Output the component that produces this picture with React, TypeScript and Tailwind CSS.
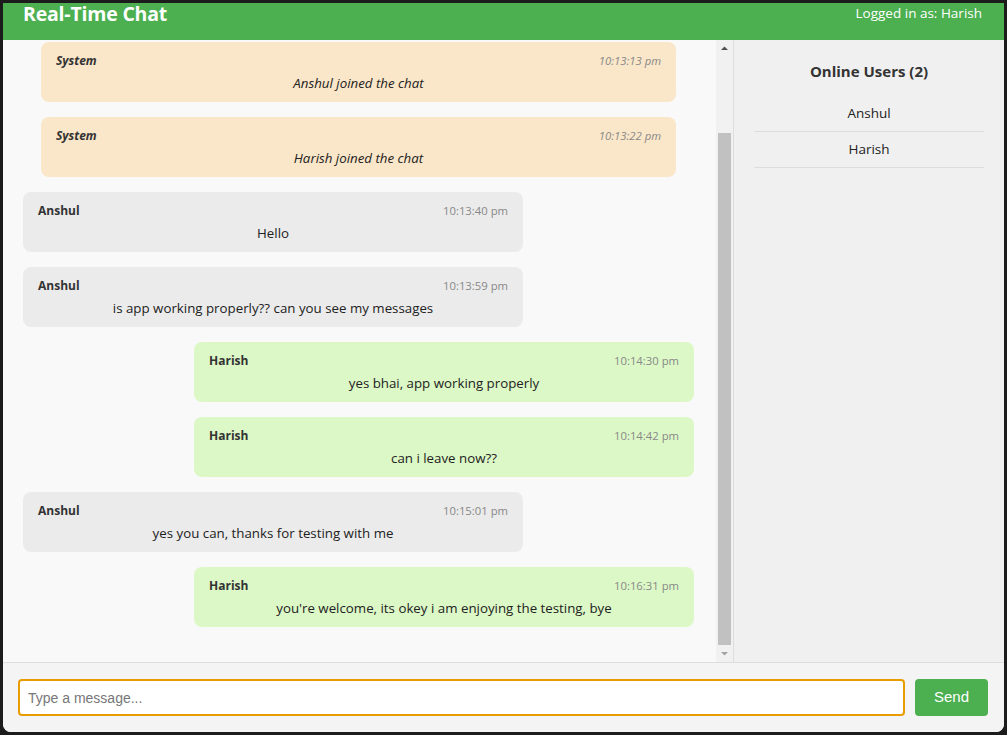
const messages = [
  { kind: "system", user: "System", time: "10:13:13 pm", text: "Anshul joined the chat" },
  { kind: "system", user: "System", time: "10:13:22 pm", text: "Harish joined the chat" },
  { kind: "other", user: "Anshul", time: "10:13:40 pm", text: "Hello" },
  { kind: "other", user: "Anshul", time: "10:13:59 pm", text: "is app working properly?? can you see my messages" },
  { kind: "own", user: "Harish", time: "10:14:30 pm", text: "yes bhai, app working properly" },
  { kind: "own", user: "Harish", time: "10:14:42 pm", text: "can i leave now??" },
  { kind: "other", user: "Anshul", time: "10:15:01 pm", text: "yes you can, thanks for testing with me" },
  { kind: "own", user: "Harish", time: "10:16:31 pm", text: "you're welcome, its okey i am enjoying the testing, bye" },
]

const users = ["Anshul", "Harish"]

function Message({ m }: { m: (typeof messages)[number] }) {
  const box =
    m.kind === "system"
      ? "mx-[18px] bg-[#fae6c8] italic"
      : m.kind === "own"
        ? "ml-auto w-[500px] bg-[#dcf8c6]"
        : "w-[500px] bg-[#ebebeb]"
  return (
    <div className={`h-[60px] shrink-0 rounded-lg px-[15px] pt-[11px] ${box}`}>
      <div className="flex h-4 items-center justify-between leading-4">
        <span className="text-[12px] font-bold text-[#333]">{m.user}</span>
        <span className="text-[11.3px] text-[#888]">{m.time}</span>
      </div>
      <p className="mt-[4px] text-center text-[13.3px] leading-5 text-[#222]">{m.text}</p>
    </div>
  )
}

export default function App() {
  return (
    <div className="h-[735px] w-[1007px] bg-[#1c1c1c] p-[3px] font-['Open_Sans','Noto_Sans',sans-serif]">
      <div className="flex h-[729px] flex-col overflow-hidden rounded-b-lg bg-[#f9f9f9]">

        {/* Header */}
        <header className="flex h-[37px] shrink-0 items-start justify-between bg-[#4caf50] pl-5 pr-[22px] text-white">
          <h1 className="text-[19.5px] font-bold leading-[21px] tracking-[-0.2px]">Real-Time Chat</h1>
          <span className="text-[13.5px] leading-5">Logged in as: Harish</span>
        </header>

        <div className="flex min-h-0 flex-1">
          {/* Messages */}
          <div className="flex min-w-0 flex-1 bg-[#f9f9f9]">
            <div className="flex flex-1 flex-col gap-[15px] overflow-hidden pl-5 pr-[22px] pt-[2px]">
              {messages.map((m, i) => (
                <Message key={i} m={m} />
              ))}
            </div>

            {/* scrollbar */}
            <div className="flex w-[17px] shrink-0 flex-col items-center bg-[#f1f1f1]">
              <svg width="17" height="17" viewBox="0 0 17 17">
                <path d="M5 10 L8.5 6.5 L12 10 Z" fill="#505050" />
              </svg>
              <div className="mt-[76px] h-[512px] w-[13px] bg-[#c1c1c1]" />
              <svg width="17" height="17" viewBox="0 0 17 17" className="mt-auto">
                <path d="M5 7 L8.5 10.5 L12 7 Z" fill="#a3a3a3" />
              </svg>
            </div>
          </div>

          {/* Sidebar */}
          <aside className="w-[271px] shrink-0 border-l border-[#ddd] bg-[#f0f0f0] px-5 pt-5">
            <h3 className="mb-[14px] text-center text-[15px] font-bold leading-[22px] text-[#333]">
              Online Users ({users.length})
            </h3>
            <ul>
              {users.map((u) => (
                <li key={u} className="border-b border-[#ddd] py-2 text-center text-[13.5px] leading-[19px] text-[#222]">
                  {u}
                </li>
              ))}
            </ul>
          </aside>
        </div>

        {/* Input */}
        <div className="flex h-[70px] shrink-0 items-center gap-[10px] border-t border-[#ddd] bg-[#f4f4f4] pl-[15px] pr-4">
          <input
            placeholder="Type a message..."
            className="h-[37px] flex-1 rounded border-2 border-[#e89c00] bg-white px-2 font-['Liberation_Sans',Arial,sans-serif] text-[14px] outline-none placeholder:text-[#777]"
          />
          <button className="h-[37px] w-[73px] rounded bg-[#4caf50] font-['Liberation_Sans',Arial,sans-serif] text-[15px] text-white">
            Send
          </button>
        </div>
      </div>
    </div>
  )
}
